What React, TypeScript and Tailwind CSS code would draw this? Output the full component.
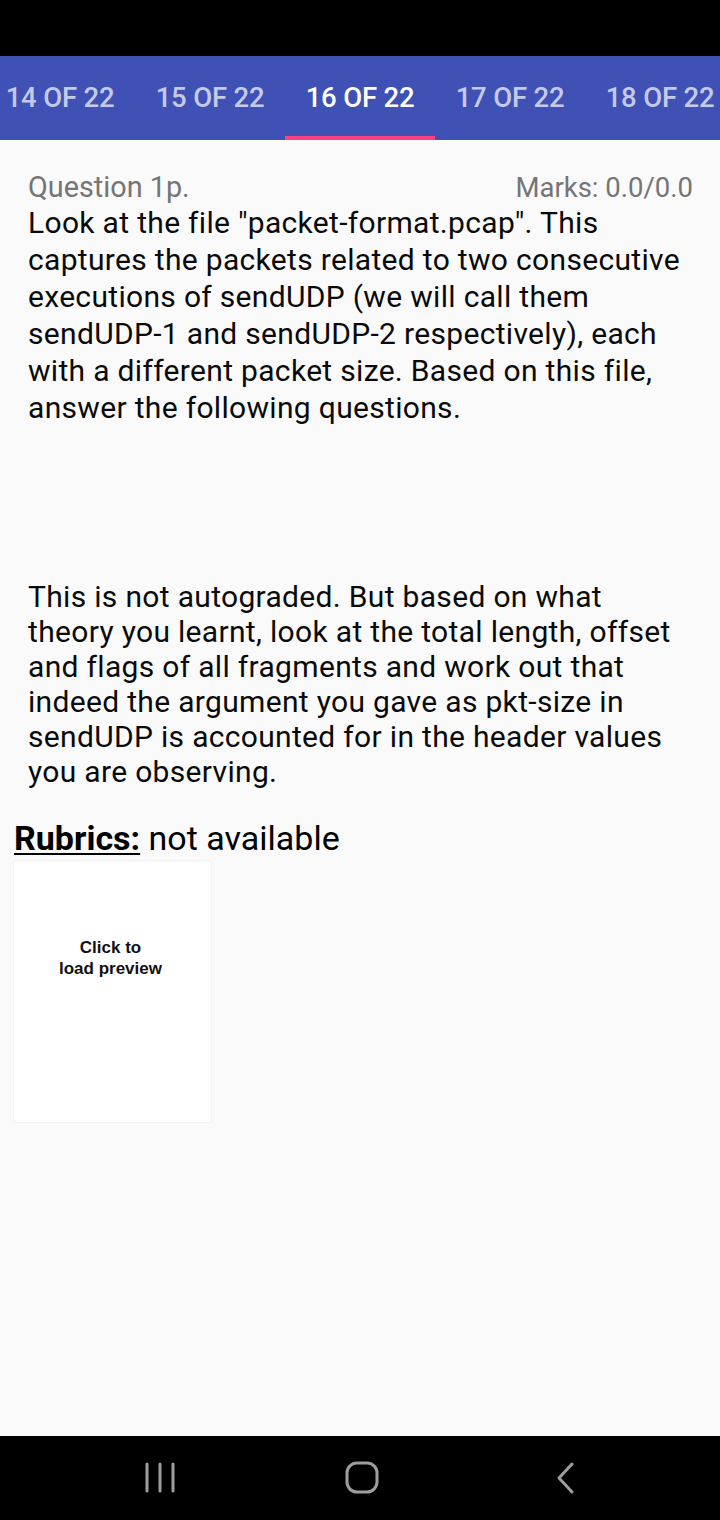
const tabs = ["14 OF 22", "15 OF 22", "16 OF 22", "17 OF 22", "18 OF 22"];

const para1 = [
  'Look at the file "packet-format.pcap". This',
  "captures the packets related to two consecutive",
  "executions of sendUDP (we will call them",
  "sendUDP-1 and sendUDP-2 respectively), each",
  "with a different packet size. Based on this file,",
  "answer the following questions.",
];

const para2 = [
  "This is not autograded. But based on what",
  "theory you learnt, look at the total length, offset",
  "and flags of all fragments and work out that",
  "indeed the argument you gave as pkt-size in",
  "sendUDP is accounted for in the header values",
  "you are observing.",
];

function Tabs() {
  return (
    <div className="bg-[#3f51b5] h-[84px] flex overflow-hidden">
      <div className="flex shrink-0 -ml-[15px]">
        {tabs.map((t, i) => (
          <div
            key={t}
            className={
              "w-[150px] shrink-0 flex flex-col justify-end " +
              (i === 2 ? "text-white" : "text-[#c5cae9]")
            }
          >
            <div className="flex-1 flex items-center justify-center pt-[4px] text-[27.5px] font-medium tracking-[-0.2px]">
              {t}
            </div>
            <div className={"h-[4px] " + (i === 2 ? "bg-[#ff4081]" : "")}></div>
          </div>
        ))}
      </div>
    </div>
  );
}

function NavBar() {
  return (
    <div className="bg-black h-[84px] flex items-center justify-center gap-[168px] pl-[2px]">
      <svg width="34" height="34" viewBox="0 0 34 34" className="ml-[2px]">
        <g stroke="#9e9e9e" strokeWidth="3" strokeLinecap="round">
          <line x1="4" y1="3" x2="4" y2="30" />
          <line x1="17" y1="3" x2="17" y2="30" />
          <line x1="30" y1="3" x2="30" y2="30" />
        </g>
      </svg>
      <svg width="34" height="34" viewBox="0 0 34 34">
        <rect x="2" y="2" width="30" height="29" rx="10" fill="none" stroke="#9e9e9e" strokeWidth="3" />
      </svg>
      <svg width="34" height="34" viewBox="0 0 34 34">
        <polyline points="25,3 12,17 25,31" fill="none" stroke="#9e9e9e" strokeWidth="3" strokeLinecap="round" strokeLinejoin="round" />
      </svg>
    </div>
  );
}

export default function App() {
  return (
    <div className="w-[720px] h-[1520px] flex flex-col bg-[#fafafa] font-['Roboto',sans-serif]">
      <div className="h-[56px] bg-black"></div>
      <Tabs />
      <div className="flex-1 flex flex-col">
        <div className="px-[28px] pt-[31px]">
          <div className="flex justify-between items-baseline leading-[32px] text-[#757575] -mr-[1px]">
            <span className="text-[28.8px]">Question 1p.</span>
            <span className="text-[27.5px]">Marks: 0.0/0.0</span>
          </div>
          <p className="text-[30px] tracking-[0.32px] leading-[37px] text-[#0a0a0a] whitespace-nowrap">
            {para1.map((l) => (
              <span key={l} className="block">
                {l}
              </span>
            ))}
          </p>
          <p className="text-[30px] tracking-[0.32px] leading-[35px] text-[#0a0a0a] mt-[153px] whitespace-nowrap">
            {para2.map((l) => (
              <span key={l} className="block">
                {l}
              </span>
            ))}
          </p>
        </div>
        <div className="px-[14px] mt-[29px]">
          <div className="text-[34px] leading-[40px] text-black">
            <span className="font-bold underline decoration-[2px] underline-offset-[3px]">Rubrics:</span>{" "}
            not available
          </div>
          <div className="mt-[3px] w-[197px] h-[261px] bg-white rounded-[3px] shadow-[0_0_2px_rgba(0,0,0,0.12)] flex flex-col items-center pt-[76px] pr-[4px]">
            <div className="font-['Liberation_Sans',Arial,sans-serif] font-bold text-[17px] leading-[21px] text-[#111] text-center">
              Click to
              <br />
              load preview
            </div>
          </div>
        </div>
      </div>
      <NavBar />
    </div>
  );
}
